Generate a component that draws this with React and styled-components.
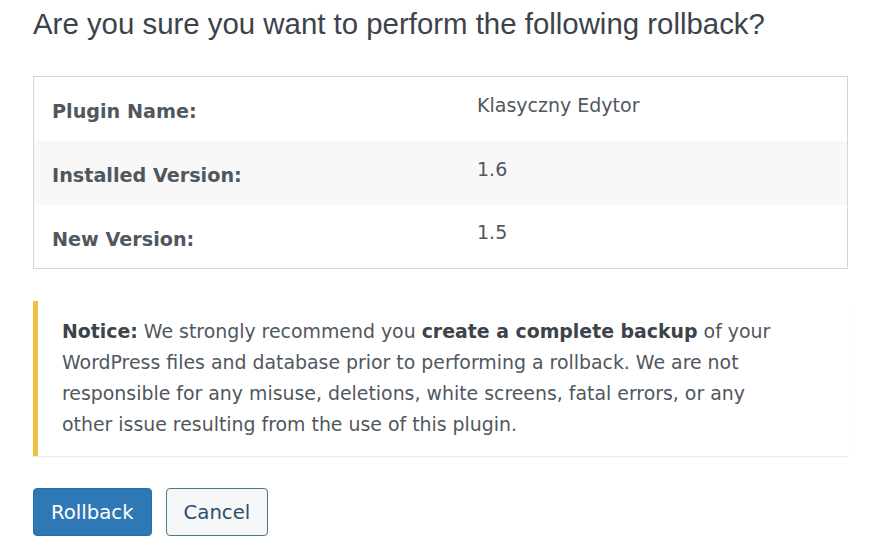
import styled, { createGlobalStyle } from "styled-components";

const GlobalStyle = createGlobalStyle`
  body {
    margin: 0;
    background: #ffffff;
    font-family: "DejaVu Sans", "Liberation Sans", sans-serif;
    color: #3c434a;
  }
`;

const Page = styled.div`
  padding: 5px 32px 0 33px;
  width: 815px;
`;

const Heading = styled.h1`
  margin: 0 0 33px;
  font-family: "Liberation Sans", Arial, sans-serif;
  font-size: 29.4px;
  font-weight: 400;
  line-height: 38px;
  color: #3c434a;
`;

const Table = styled.table`
  width: 815px;
  border-collapse: collapse;
  border: 1px solid #d5d6d8;
`;

const Row = styled.tr`
  height: 64px;
  background: ${({ $alt }) => ($alt ? "#f8f8f8" : "#ffffff")};
`;

const Label = styled.th`
  width: 425px;
  padding: 6px 0 0 18px;
  text-align: left;
  font-size: 19.2px;
  font-weight: 700;
  color: #50575e;
`;

const Value = styled.td`
  padding: 0 0 8px 0;
  font-size: 19px;
  color: #50575e;
`;

const Notice = styled.div`
  margin-top: 32px;
  border-left: 5px solid #f0c040;
  box-shadow: 0 1px 1px rgba(0, 0, 0, 0.08);
  padding: 15px 58px 16px 24px;
  font-size: 18.9px;
  line-height: 31px;
  color: #50575e;

  strong {
    font-weight: 700;
    color: #3c434a;
  }
`;

const Actions = styled.div`
  display: flex;
  gap: 14px;
  margin-top: 32px;
`;

const Button = styled.button`
  height: 48px;
  padding: 0 17px;
  border-radius: 4px;
  font-family: "DejaVu Sans", "Liberation Sans", sans-serif;
  font-size: 19.7px;
  border: 1px solid ${({ $primary }) => ($primary ? "#2271b1" : "#4f7893")};
  background: ${({ $primary }) => ($primary ? "#2f78b6" : "#f6f7f7")};
  color: ${({ $primary }) => ($primary ? "#ffffff" : "#2d4f6b")};
  cursor: pointer;
`;

const rows = [
  ["Plugin Name:", "Klasyczny Edytor"],
  ["Installed Version:", "1.6"],
  ["New Version:", "1.5"],
];

export default function App() {
  return (
    <>
      <GlobalStyle />
      <Page>
        <Heading>Are you sure you want to perform the following rollback?</Heading>
        <Table>
          <tbody>
            {rows.map(([label, value], i) => (
              <Row key={label} $alt={i === 1}>
                <Label>{label}</Label>
                <Value>{value}</Value>
              </Row>
            ))}
          </tbody>
        </Table>
        <Notice>
          <strong>Notice:</strong> We strongly recommend you{" "}
          <strong>create a complete backup</strong> of your WordPress files and
          database prior to performing a rollback. We are not responsible for
          any misuse, deletions, white screens, fatal errors, or any other issue
          resulting from the use of this plugin.
        </Notice>
        <Actions>
          <Button $primary>Rollback</Button>
          <Button>Cancel</Button>
        </Actions>
      </Page>
    </>
  );
}
